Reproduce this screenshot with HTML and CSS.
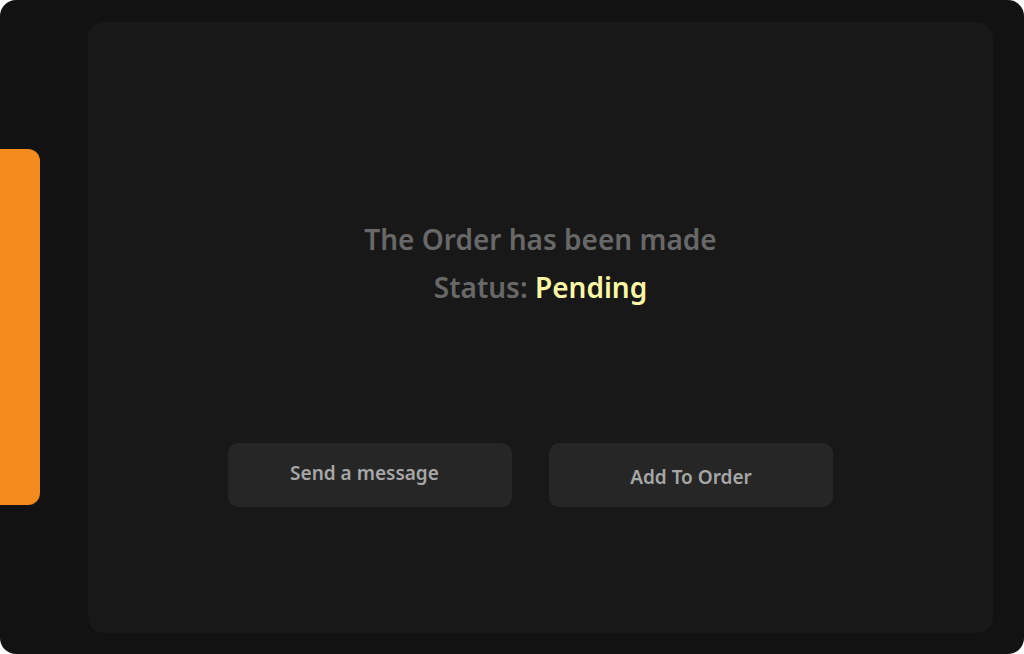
FILE: index.html
```html
<!DOCTYPE html>
<html>
<head>
<meta charset="utf-8">
<link rel="stylesheet" href="styles.css">
</head>
<body>
<div class="window">
  <div class="rail"><div class="tab"></div></div>
  <main class="panel">
    <div class="message">
      <div class="line">The Order has been made</div>
      <div class="line">Status: <span class="pending">Pending</span></div>
    </div>
    <div class="actions">
      <button class="btn btn-send">Send a message</button>
      <button class="btn btn-add">Add To Order</button>
    </div>
  </main>
</div>
</body>
</html>
```
FILE: styles.css
```css
html, body {
  margin: 0;
  padding: 0;
  background: #ffffff;
}
.window {
  width: 1024px;
  height: 654px;
  background: #121212;
  border-radius: 16px;
  display: flex;
  overflow: hidden;
  font-family: "Noto Sans", "Open Sans", sans-serif;
}
.rail {
  width: 88px;
  flex: none;
  padding-top: 149px;
  box-sizing: border-box;
}
.tab {
  width: 40px;
  height: 356px;
  background: #f58a1e;
  border-radius: 0 12px 12px 0;
}
.panel {
  width: 905px;
  height: 611px;
  margin-top: 22px;
  background: #181818;
  border-radius: 16px;
  display: flex;
  flex-direction: column;
  align-items: center;
  box-sizing: border-box;
  padding-top: 193px;
}
.message {
  text-align: center;
  color: #686868;
  font-size: 28px;
  font-weight: 600;
  line-height: 48px;
}
.pending {
  color: #fdf7a6;
}
.actions {
  display: flex;
  gap: 37px;
  margin-top: 132px;
  margin-left: -20px;
}
.btn {
  width: 284px;
  height: 64px;
  border: none;
  border-radius: 10px;
  background: #262626;
  color: #a6a6a6;
  font-family: inherit;
  font-size: 19px;
  font-weight: 600;
  padding: 0;
}
.btn-send {
  padding-bottom: 4px;
  padding-right: 11px;
}
.btn-add {
  padding-top: 4px;
}
```
